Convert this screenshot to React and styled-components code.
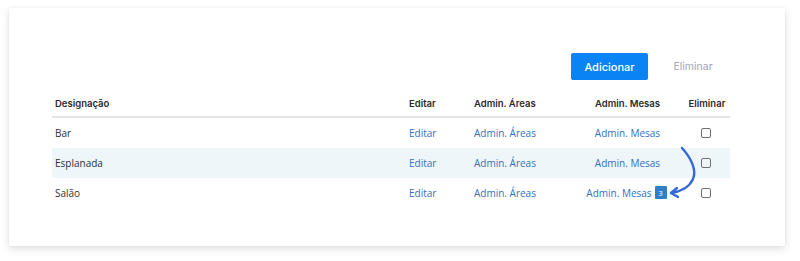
import styled, { createGlobalStyle } from "styled-components";

const GlobalStyle = createGlobalStyle`
    body {
        margin: 0;
        background: #FFFFFF;
        font-family: "Open Sans", "Noto Sans", sans-serif;
    }
`

const Page = styled.div`
    padding: 8px 15px 14px 9px;
`

const Card = styled.div`
    background-color: #FFFFFF;
    box-shadow: 0 3px 8px rgba(0, 0, 0, 0.13), 0 0 2px rgba(0, 0, 0, 0.06);
    padding: 45px 55px 40px 43px;
    height: 238px;
    box-sizing: border-box;
`

const Toolbar = styled.div`
    display: flex;
    justify-content: flex-end;
    align-items: center;
    column-gap: 13px;
    padding-right: 5px;
    margin-bottom: 12px;
`

const BotaoAdicionar = styled.button`
    font-family: "Inter", sans-serif;
    font-weight: 500;
    font-size: 11px;
    color: #FFFFFF;
    background-color: #0A84F5;
    border: none;
    border-radius: 2px;
    width: 77px;
    height: 27px;
    padding: 0;
`

const BotaoEliminar = styled.button`
    font-family: "Inter", sans-serif;
    font-size: 10.5px;
    color: #A3A8B3;
    background: none;
    border: none;
    width: 64px;
    padding: 0;
`

const Linha = styled.div`
    display: grid;
    grid-template-columns: 1fr 65px 100px 110px 49px;
    align-items: center;
    height: ${props => props.$cabecalho ? "26px" : "30px"};
    background-color: ${props => props.$destaque ? "#EEF6F9" : "transparent"};
    border-bottom: ${props => props.$cabecalho ? "2px solid #E2E4E7" : "none"};
    box-sizing: border-box;
`

const Titulo = styled.div`
    font-family: "Inter", sans-serif;
    font-weight: 600;
    font-size: 9.5px;
    color: #2B2B2B;
    padding-left: 3px;
    padding-bottom: 1px;
    text-align: ${props => props.$centro ? "center" : "left"};
`

const Celula = styled.div`
    font-size: 10px;
    color: #303030;
    padding-left: 3px;
    padding-bottom: 1px;
    display: flex;
    align-items: center;
    justify-content: ${props => props.$centro ? "center" : "flex-start"};
    column-gap: 3px;
`

const Ligacao = styled.a`
    color: #3470C0;
    text-decoration: none;
`

const Contador = styled.span`
    position: relative;
    display: inline-flex;
    align-items: center;
    justify-content: center;
    width: 12px;
    height: 13px;
    background-color: #2F7FC8;
    color: #FFFFFF;
    font-size: 8px;
    border-radius: 1px;
    margin-right: 2px;
`

const Caixa = styled.span`
    width: 8px;
    height: 8px;
    border: 1px solid #707070;
    border-radius: 2px;
    margin-right: 3px;
`

const Seta = styled.svg`
    position: absolute;
    left: 14px;
    top: -40px;
    overflow: visible;
`

const areas = [
    { nome: "Bar" },
    { nome: "Esplanada", destaque: true },
    { nome: "Salão", contador: 3 },
]

export default function App() {
    return (
        <>
            <GlobalStyle />
            <Page>
                <Card>
                    <Toolbar>
                        <BotaoAdicionar>Adicionar</BotaoAdicionar>
                        <BotaoEliminar>Eliminar</BotaoEliminar>
                    </Toolbar>
                    <Linha $cabecalho>
                        <Titulo>Designação</Titulo>
                        <Titulo>Editar</Titulo>
                        <Titulo>Admin. Áreas</Titulo>
                        <Titulo $centro>Admin. Mesas</Titulo>
                        <Titulo $centro>Eliminar</Titulo>
                    </Linha>
                    {areas.map(area => (
                        <Linha key={area.nome} $destaque={area.destaque}>
                            <Celula>{area.nome}</Celula>
                            <Celula><Ligacao href="#">Editar</Ligacao></Celula>
                            <Celula><Ligacao href="#">Admin. Áreas</Ligacao></Celula>
                            <Celula $centro>
                                <Ligacao href="#">Admin. Mesas</Ligacao>
                                {area.contador && (
                                    <Contador>
                                        {area.contador}
                                        <Seta width="30" height="52" viewBox="0 0 30 52">
                                            <path d="M13 2 C 22 12, 28 24, 24 33 C 20 42, 10 46, 2 47" fill="none" stroke="#3468D8" strokeWidth="2.4" strokeLinecap="round" />
                                            <path d="M8 42 L 2 47 L 9 51" fill="none" stroke="#3468D8" strokeWidth="2.4" strokeLinecap="round" strokeLinejoin="round" />
                                        </Seta>
                                    </Contador>
                                )}
                            </Celula>
                            <Celula $centro><Caixa /></Celula>
                        </Linha>
                    ))}
                </Card>
            </Page>
        </>
    )
}
